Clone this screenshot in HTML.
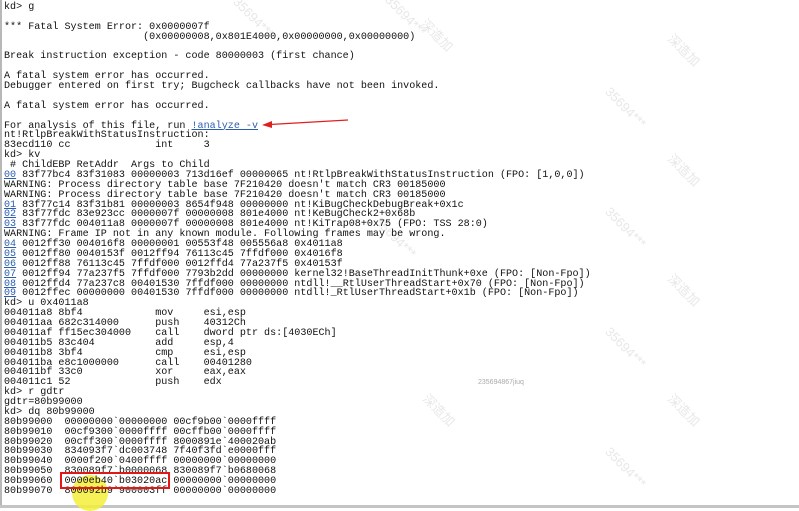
<!DOCTYPE html>
<html><head><meta charset="utf-8"><style>
html,body{margin:0;padding:0;background:#fff;}
body{width:799px;height:508px;position:relative;overflow:hidden;}
pre{position:absolute;left:4px;top:3px;margin:0;font-family:"Liberation Mono",monospace;font-size:10.08px;line-height:9.87px;color:#111;white-space:pre;}
a{color:#2a5db0;text-decoration:underline;}
.wm{position:absolute;color:#e8e8e8;font-family:"Liberation Sans","Noto Sans CJK SC",sans-serif;font-size:13px;transform:rotate(45deg);white-space:nowrap;}
</style></head><body>
<div style="position:absolute;left:0;top:0;width:2px;height:508px;background:#b8b8b8"></div>
<div style="position:absolute;left:0;top:505px;width:799px;height:3px;background:#c4c4c4"></div>
<div class="wm" style="left:228px;top:10px">35694***</div>
<div class="wm" style="left:418px;top:25px">深造加</div>
<div class="wm" style="left:380px;top:8px">35694***</div>
<div class="wm" style="left:600px;top:100px">35694***</div>
<div class="wm" style="left:665px;top:40px">深造加</div>
<div class="wm" style="left:600px;top:220px">35694***</div>
<div class="wm" style="left:665px;top:160px">深造加</div>
<div class="wm" style="left:600px;top:340px">35694***</div>
<div class="wm" style="left:665px;top:280px">深造加</div>
<div class="wm" style="left:600px;top:460px">35694***</div>
<div class="wm" style="left:665px;top:400px">深造加</div>
<div class="wm" style="left:370px;top:230px">35694***</div>
<div class="wm" style="left:420px;top:400px">深造加</div>
<div style="position:absolute;left:478px;top:379px;font-family:'Liberation Sans',sans-serif;font-size:7px;color:#aaa">235694867jiuq</div>
<div style="position:absolute;left:72px;top:475px;width:36px;height:36px;border-radius:50%;background:#f4ee3a;opacity:.85"></div>
<pre>kd&gt; g

*** Fatal System Error: 0x0000007f
                       (0x00000008,0x801E4000,0x00000000,0x00000000)

Break instruction exception - code 80000003 (first chance)

A fatal system error has occurred.
Debugger entered on first try; Bugcheck callbacks have not been invoked.

A fatal system error has occurred.

For analysis of this file, run <a>!analyze -v</a>
nt!RtlpBreakWithStatusInstruction:
83ecd110 cc              int     3
kd&gt; kv
 # ChildEBP RetAddr  Args to Child              
<a>00</a> 83f77bc4 83f31083 00000003 713d16ef 00000065 nt!RtlpBreakWithStatusInstruction (FPO: [1,0,0])
WARNING: Process directory table base 7F210420 doesn't match CR3 00185000
WARNING: Process directory table base 7F210420 doesn't match CR3 00185000
<a>01</a> 83f77c14 83f31b81 00000003 8654f948 00000000 nt!KiBugCheckDebugBreak+0x1c
<a>02</a> 83f77fdc 83e923cc 0000007f 00000008 801e4000 nt!KeBugCheck2+0x68b
<a>03</a> 83f77fdc 004011a8 0000007f 00000008 801e4000 nt!KiTrap08+0x75 (FPO: TSS 28:0)
WARNING: Frame IP not in any known module. Following frames may be wrong.
<a>04</a> 0012ff30 004016f8 00000001 00553f48 005556a8 0x4011a8
<a>05</a> 0012ff80 0040153f 0012ff94 76113c45 7ffdf000 0x4016f8
<a>06</a> 0012ff88 76113c45 7ffdf000 0012ffd4 77a237f5 0x40153f
<a>07</a> 0012ff94 77a237f5 7ffdf000 7793b2dd 00000000 kernel32!BaseThreadInitThunk+0xe (FPO: [Non-Fpo])
<a>08</a> 0012ffd4 77a237c8 00401530 7ffdf000 00000000 ntdll!__RtlUserThreadStart+0x70 (FPO: [Non-Fpo])
<a>09</a> 0012ffec 00000000 00401530 7ffdf000 00000000 ntdll!_RtlUserThreadStart+0x1b (FPO: [Non-Fpo])
kd&gt; u 0x4011a8
004011a8 8bf4            mov     esi,esp
004011aa 682c314000      push    40312Ch
004011af ff15ec304000    call    dword ptr ds:[4030ECh]
004011b5 83c404          add     esp,4
004011b8 3bf4            cmp     esi,esp
004011ba e8c1000000      call    00401280
004011bf 33c0            xor     eax,eax
004011c1 52              push    edx
kd&gt; r gdtr
gdtr=80b99000
kd&gt; dq 80b99000
80b99000  00000000`00000000 00cf9b00`0000ffff
80b99010  00cf9300`0000ffff 00cffb00`0000ffff
80b99020  00cff300`0000ffff 8000891e`400020ab
80b99030  834093f7`dc003748 7f40f3fd`e0000fff
80b99040  0000f200`0400ffff 00000000`00000000
80b99050  830089f7`b0000068 830089f7`b0680068
80b99060  0000eb40`b03020ac 00000000`00000000
80b99070  800092b9`900003ff 00000000`00000000</pre>
<div style="position:absolute;left:60px;top:472px;width:106px;height:13px;border:2px solid #e01818"></div>
<svg style="position:absolute;left:0;top:0" width="799" height="508"><line x1="348" y1="120" x2="270" y2="124.5" stroke="#e02020" stroke-width="1.3"/><polygon points="262,125 272,121 272,128" fill="#e02020"/></svg>
</body></html>
